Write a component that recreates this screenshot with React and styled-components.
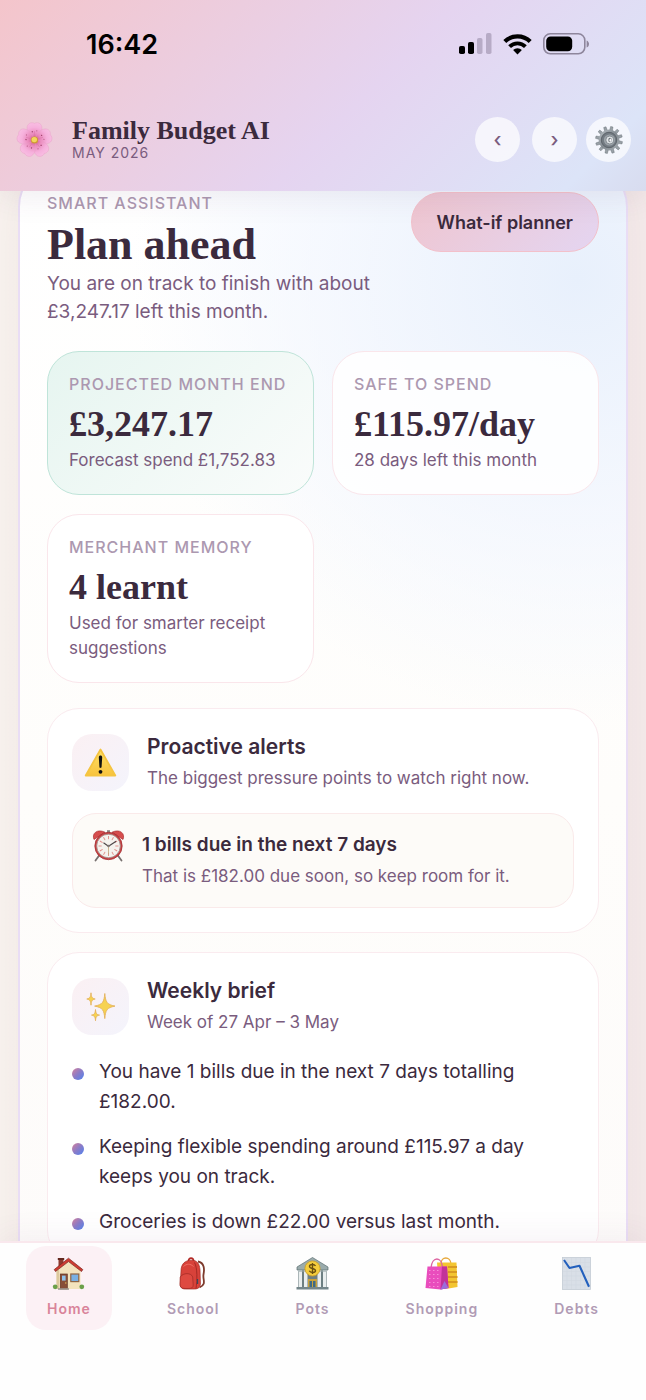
import React from 'react'
import styled, { createGlobalStyle } from 'styled-components'

const GlobalStyle = createGlobalStyle`
  * {
    box-sizing: border-box;
  }
  body {
    margin: 0;
    font-family: Inter, 'Liberation Sans', sans-serif;
    color: #3b2a3d;
    background: #ffffff;
  }
  h1, h2, h3, p, ul {
    margin: 0;
    padding: 0;
  }
  button {
    font-family: inherit;
    border: none;
    cursor: pointer;
  }
`

const Screen = styled.div`
  display: flex;
  flex-direction: column;
  height: 100vh;
  overflow: hidden;
`

/* header */

const Header = styled.header`
  position: relative;
  z-index: 2;
  flex-shrink: 0;
  background: linear-gradient(135deg, #f4c5cb 0%, #e5d4f0 55%, #dce4f8 90%, #d8dcef 100%);
  box-shadow: 0 4px 30px rgba(90, 60, 100, 0.1);
`

const StatusBar = styled.div`
  display: flex;
  align-items: center;
  justify-content: space-between;
  height: 88px;
  padding: 0 56px 0 86px;
`

const Clock = styled.span`
  font-size: 27px;
  font-weight: 600;
  color: #000000;
`

const StatusIcons = styled.div`
  display: flex;
  align-items: center;
  gap: 11px;
`

const TopBar = styled.div`
  display: flex;
  align-items: center;
  height: 103px;
  padding: 0 15px 0 16px;
  gap: 9px;
`

const Brand = styled.div`
  flex: 1;
  display: flex;
  align-items: center;
  gap: 19px;
`

const AppName = styled.h1`
  font-family: 'Liberation Serif', serif;
  font-size: 26px;
  font-weight: 700;
  line-height: 26px;
`

const Month = styled.p`
  font-size: 14px;
  line-height: 18px;
  letter-spacing: 1px;
  color: #7a5c7e;
`

const MonthSwitch = styled.div`
  display: flex;
  gap: 12px;
`

const RoundButton = styled.button`
  display: flex;
  align-items: center;
  justify-content: center;
  width: 45px;
  height: 45px;
  padding: 0;
  border-radius: 50%;
  font-size: 20px;
  font-weight: 500;
  line-height: 24px;
  color: #7a5c7e;
  background: rgba(255, 255, 255, 0.7);
`

/* content */

const Content = styled.main`
  flex: 1;
  min-height: 0;
  overflow: auto;
  scrollbar-width: none;
  padding: 0 18px;
  background: linear-gradient(90deg, #f8f2ee 0%, #f4eaea 100%);
`

const Assistant = styled.section`
  margin-top: -28px;
  margin-bottom: 40px;
  padding: 27px;
  border: 2px solid #e9ddf5;
  border-radius: 44px;
  background:
    radial-gradient(circle at 92% 10%, #e8f0fc 0%, rgba(240, 245, 254, 0.7) 20%, rgba(255, 255, 255, 0) 38%),
    linear-gradient(180deg, #ffffff 0%, #fefdfb 55%, #fdfbfa 100%);
  box-shadow: 0 8px 40px rgba(120, 80, 110, 0.06);
`

const AssistantHead = styled.div`
  display: flex;
  align-items: flex-start;
  justify-content: space-between;
  gap: 20px;
  margin-bottom: 25px;
`

const Label = styled.p`
  font-size: 16px;
  font-weight: 500;
  line-height: 23px;
  letter-spacing: 1px;
  text-transform: uppercase;
  white-space: nowrap;
  color: #ac98b0;
`

const Title = styled.h2`
  margin: 6px 0 1px;
  font-family: 'Liberation Serif', serif;
  font-size: 44px;
  font-weight: 700;
  line-height: 48px;
`

const Lead = styled.p`
  font-size: 19px;
  line-height: 28px;
  color: #7a5c7e;
`

const PlannerButton = styled.button`
  flex-shrink: 0;
  height: 60px;
  padding: 0 25px;
  border: 1px solid #f3c0ca;
  border-radius: 30px;
  font-size: 18px;
  font-weight: 600;
  color: #3b2a3d;
  background: linear-gradient(135deg, #efc5cf 0%, #e4d5f1 100%);
`

const Stats = styled.div`
  display: grid;
  grid-template-columns: 1fr 1fr;
  gap: 19px 18px;
  margin-bottom: 25px;
`

const Stat = styled.div`
  padding: 21px;
  border: 1px solid ${props => props.$good ? '#bfe4d9' : '#fae6eb'};
  border-radius: 32px;
  background: ${props => props.$good
    ? 'linear-gradient(135deg, #e6f5f0 0%, #fafcfb 100%)'
    : 'rgba(255, 255, 255, 0.85)'};
`

const StatValue = styled.p`
  margin: 8px 0 4px;
  font-family: 'Liberation Serif', serif;
  font-size: 36px;
  font-weight: 700;
  line-height: 40px;
  white-space: nowrap;
`

const StatNote = styled.p`
  font-size: 17px;
  line-height: 25px;
  color: #7a5c7e;
`

const Panel = styled.section`
  margin-bottom: 19px;
  padding: 24px;
  border: 1px solid #faebef;
  border-radius: 32px;
  background: rgba(255, 255, 255, 0.9);
`

const PanelHead = styled.div`
  display: flex;
  align-items: center;
  gap: 18px;
  margin-bottom: 21px;
`

const IconTile = styled.div`
  display: flex;
  align-items: center;
  justify-content: center;
  width: 57px;
  height: 57px;
  border-radius: 20px;
  background: linear-gradient(135deg, #fbf0f3 0%, #f4f4fc 100%);
`

const PanelTitle = styled.h3`
  font-size: ${props => props.$small ? '19px' : '21px'};
  font-weight: 600;
  line-height: 28px;
`

const PanelNote = styled.p`
  margin-top: 3px;
  font-size: 17px;
  line-height: 28px;
  color: #7a5c7e;
`

const Alert = styled.div`
  display: flex;
  align-items: flex-start;
  gap: 17px;
  padding: 17px 19px;
  border: 1px solid #faeaea;
  border-radius: 24px;
  background: #fdfbf8;

  svg {
    margin-top: -2px;
  }
`

const BriefList = styled.ul`
  display: flex;
  flex-direction: column;
  gap: 15px;
  list-style: none;
`

const BriefItem = styled.li`
  display: flex;
  gap: 15px;
  font-size: 19px;
  line-height: 30px;

  &::before {
    content: '';
    flex-shrink: 0;
    width: 12px;
    height: 12px;
    margin-top: 11px;
    border-radius: 50%;
    background: linear-gradient(135deg, #d7819b 0%, #8a7cc8 50%, #4f83f0 100%);
  }
`

/* bottom navigation */

const Nav = styled.nav`
  position: relative;
  z-index: 2;
  flex-shrink: 0;
  display: flex;
  justify-content: space-around;
  padding: 3px 9px 70px;
  border-top: 2px solid #f9e8ed;
  background: #fefefe;
  box-shadow: 0 -4px 30px rgba(120, 70, 110, 0.07);
`

const NavItem = styled.a`
  display: flex;
  flex-direction: column;
  align-items: center;
  gap: 8px;
  padding: 11px 21px 10px;
  border-radius: 20px;
  font-size: 14px;
  font-weight: 600;
  line-height: 22px;
  letter-spacing: 1px;
  text-decoration: none;
  color: ${props => props.$active ? '#d9849a' : '#b19bb5'};
  background: ${props => props.$active ? '#fcf1f5' : 'transparent'};
`

/* icons */

const Signal = () => (
  <svg width="33" height="22" viewBox="0 0 33 22" aria-hidden="true">
    <rect x="0" y="13" width="6" height="8" rx="1.8" />
    <rect x="9" y="9" width="6" height="12" rx="1.8" />
    <rect x="18" y="5" width="5.500" height="16" rx="1.8" fill="#b7abc6" />
    <rect x="27" y="0" width="5.500" height="21" rx="1.8" fill="#b7abc6" />
  </svg>
)

const Wifi = () => (
  <svg width="29" height="21" viewBox="0 0 29 21" aria-hidden="true">
    <path d="M1.800 7.600a18 18 0 0 1 25.400 0" fill="none" stroke="#000" strokeWidth="4.200" />
    <path d="M6.600 12.600a11.200 11.200 0 0 1 15.800 0" fill="none" stroke="#000" strokeWidth="3.900" />
    <path d="M14.500 20.600l-4.400-4.500a6.400 6.400 0 0 1 8.800 0z" />
  </svg>
)

const Battery = () => (
  <svg width="47" height="22" viewBox="0 0 47 22" aria-hidden="true">
    <rect x="0.800" y="0.800" width="41" height="20" rx="6.500" fill="none" stroke="#8e869c" strokeWidth="1.600" />
    <rect x="3.200" y="3.400" width="26" height="14.800" rx="4.400" />
    <path d="M43.600 7.400c3.200 1 3.200 6 0 7z" fill="#8e869c" />
  </svg>
)

const Blossom = () => (
  <svg width="37" height="37" viewBox="0 0 37 37" aria-hidden="true">
    <defs>
      <radialGradient id="petal" gradientUnits="userSpaceOnUse" cx="18.500" cy="19" r="18">
        <stop offset="0" stopColor="#c94f86" />
        <stop offset="0.350" stopColor="#ea8bbd" />
        <stop offset="0.700" stopColor="#f6b0dc" />
        <stop offset="1" stopColor="#f9bfe3" />
      </radialGradient>
    </defs>
    {[0, 72, 144, 216, 288].map(angle => (
      <g key={angle} transform={`rotate(${angle} 18.500 19)`}>
        <path d="M18.500 19C13 15 10.300 10 11.200 5.600c.8-3.500 4.600-4.800 7.300-3.200 2.700-1.600 6.500-.3 7.300 3.200C26.700 10 24 15 18.500 19z" fill="url(#petal)" stroke="#e79cc6" strokeWidth="0.400" />
        <path d="M18.500 16v-6" fill="none" stroke="#d873a8" strokeWidth="0.500" />
        <circle cx="16.300" cy="10.800" r="0.700" fill="#a2446e" />
        <circle cx="20.800" cy="9.800" r="0.600" fill="#b65c86" />
      </g>
    ))}
    <circle cx="18.500" cy="19" r="3.600" fill="#cf9a35" />
    <circle cx="18.300" cy="18.600" r="2.700" fill="#f3d65c" />
  </svg>
)

const Gear = () => (
  <svg width="28" height="28" viewBox="0 0 28 28" aria-hidden="true">
    <defs>
      <linearGradient id="steel" x1="0" y1="0" x2="1" y2="1">
        <stop offset="0" stopColor="#b9c0c5" />
        <stop offset="0.500" stopColor="#838b91" />
        <stop offset="1" stopColor="#a9b0b5" />
      </linearGradient>
    </defs>
    {[0, 30, 60, 90, 120, 150, 180, 210, 240, 270, 300, 330].map(angle => (
      <path key={angle} d="M12.600 4.500l.2-4h2.400l.2 4z" fill="#99a1a7" stroke="#636b71" strokeWidth="0.400" transform={`rotate(${angle + 12} 14 14)`} />
    ))}
    <circle cx="14" cy="14" r="10.400" fill="url(#steel)" />
    <circle cx="14" cy="14" r="7.700" fill="#737b82" stroke="#596067" strokeWidth="0.900" />
    <circle cx="14.500" cy="14" r="5.600" fill="#9da4aa" />
    <circle cx="14.800" cy="14" r="4" fill="#e2e5e8" stroke="#7c848a" strokeWidth="0.900" />
    <ellipse cx="15" cy="14" rx="1.700" ry="2.300" fill="#666e74" />
    <ellipse cx="15.400" cy="14.200" rx="1" ry="1.600" fill="#f5f5f7" />
  </svg>
)

const Warning = () => (
  <svg width="33" height="29" viewBox="0 0 33 29" aria-hidden="true">
    <defs>
      <linearGradient id="warn" x1="0" y1="0" x2="0" y2="1">
        <stop offset="0" stopColor="#ffe066" />
        <stop offset="1" stopColor="#f8c33d" />
      </linearGradient>
    </defs>
    <path d="M16.500 1.500L31.300 27.500H1.700z" fill="url(#warn)" stroke="#f5c440" strokeWidth="1.800" strokeLinejoin="round" />
    <path d="M14.800 9.200c0-2.400 3.400-2.400 3.400 0l-.6 9.600c-.1 1.600-2.100 1.600-2.200 0z" fill="#111111" />
    <circle cx="16.500" cy="23.800" r="1.900" fill="#111111" />
  </svg>
)

const AlarmClock = () => (
  <svg width="33" height="33" viewBox="0 0 33 33" aria-hidden="true">
    <path d="M7.500 26l-4 5.500M25.500 26l4 5.500" stroke="#77706f" strokeWidth="1.800" strokeLinecap="round" />
    <path d="M16.500 4V1.200" stroke="#8c8583" strokeWidth="3" />
    <path d="M2 10.500C-.5 4.500 5-.5 13 3.200zM31 10.500C33.500 4.500 28-.5 20 3.200z" fill="#d64d4d" stroke="#aa3134" strokeWidth="0.700" />
    <circle cx="16.500" cy="17" r="13.700" fill="#c94446" stroke="#9c2c30" strokeWidth="0.700" />
    <circle cx="16.500" cy="17" r="11.800" fill="#f5f3ee" stroke="#9a8c87" strokeWidth="0.800" />
    {[0, 30, 60, 90, 120, 150, 180, 210, 240, 270, 300, 330].map(angle => (
      <path key={angle} d="M16.500 7v3.200" stroke="#e08a85" strokeWidth="0.900" transform={`rotate(${angle} 16.500 17)`} />
    ))}
    <path d="M11.500 13.800l5 3.500 7.600-5" fill="none" stroke="#4d4747" strokeWidth="1.100" />
    <path d="M16.500 17v8.500" stroke="#c0a778" strokeWidth="0.800" />
    <circle cx="16.500" cy="17" r="1.200" fill="#827876" />
  </svg>
)

const Sparkles = () => (
  <svg width="30" height="30" viewBox="0 0 30 30" aria-hidden="true">
    <g fill="#f6d251" stroke="#e2ad54" strokeWidth="0.800" strokeLinejoin="round">
      <path d="M18.800 1.500c.8 8.500 2 11 10.200 12.600-8.200 1.600-9.400 4-10.200 12.500-.8-8.500-2-10.900-10.200-12.500 8.200-1.600 9.400-4.100 10.200-12.600z" />
      <path d="M5 .8c.4 4.300 1 5.500 4.200 6.200C6 7.700 5.400 8.900 5 13.200 4.600 8.900 4 7.700.8 7 4 6.300 4.600 5.100 5 .8z" />
      <path d="M9.500 17.500c.4 4 1 5 4 5.600-3 .6-3.600 1.600-4 5.600-.4-4-1-5-4-5.600 3-.6 3.600-1.600 4-5.600z" />
    </g>
  </svg>
)

const House = () => (
  <svg width="33" height="33" viewBox="0 0 33 33" aria-hidden="true">
    <rect x="6.500" y="2" width="5" height="10" fill="#8c3a2e" />
    <rect x="5.800" y="1" width="6.400" height="2" fill="#63281f" />
    <path d="M4.500 13L16.500 4 28.500 13v19h-24z" fill="#f3e3bd" />
    <path d="M4.500 13H7v19H4.500z" fill="#dcc89d" />
    <path d="M16.500 1.200L2.200 12.600l1.300 1.900L16.500 4.600l13 9.900 1.300-1.900z" fill="#cf3c32" stroke="#782520" strokeWidth="0.700" />
    <rect x="8.300" y="17" width="7" height="15" fill="#884e38" stroke="#633322" strokeWidth="0.700" />
    <rect x="10" y="18.600" width="3.600" height="5" fill="#8fc2ec" />
    <circle cx="13.800" cy="26" r=".7" fill="#e9c15d" />
    <rect x="18.800" y="17" width="8" height="7.600" fill="#79b0e4" stroke="#8e6444" strokeWidth="1.200" />
    <circle cx="3.200" cy="29.800" r="2.400" fill="#6ba04a" />
    <circle cx="29.800" cy="29.800" r="2.400" fill="#6ba04a" />
    <path d="M6 32h11" stroke="#a09b93" strokeWidth="1.600" />
  </svg>
)

const Backpack = () => (
  <svg width="33" height="33" viewBox="0 0 33 33" aria-hidden="true">
    <path d="M21 4.500c6.500 1 6.500 8 5.500 13s3.500 10-4 13" fill="none" stroke="#7d3a2c" strokeWidth="1.800" />
    <path d="M11.500 4c0-3.800 5-3.800 5 0" fill="none" stroke="#b32a26" strokeWidth="1.700" />
    <path d="M4 14C4 6.500 8.500 3.200 14.500 3.200c5.500 0 8 3.300 8.500 9.800l.4 13c.2 4-2 6-6 6H8.500c-4 0-5.500-2-5.200-5z" fill="#d8423a" stroke="#a32823" strokeWidth="0.700" />
    <path d="M17.500 5.500c3 5 2.800 18 1.500 26" fill="none" stroke="#9e2723" strokeWidth="0.900" />
    <path d="M3.200 20c3-4.500 11-4.500 12.500 0l.5 8c0 3-2 3.500-5 3.500H8c-3.500 0-5.200-1.500-5-4.500z" fill="#de4a41" stroke="#9e2a24" strokeWidth="0.700" />
    <path d="M6.500 9.500c3-3 7-3 10 0" fill="none" stroke="#ef7469" strokeWidth="0.900" />
    <path d="M20.500 22v5" stroke="#3d4658" strokeWidth="1.300" />
  </svg>
)

const Bank = () => (
  <svg width="33" height="33" viewBox="0 0 33 33" aria-hidden="true">
    <rect x="2" y="11" width="29" height="19" fill="#6d7f82" />
    <path d="M16.500.5L32 10v3H1v-3z" fill="#9aabac" stroke="#5d6e71" strokeWidth="0.700" />
    {[2.5, 8, 21.5, 27].map(x => (
      <g key={x}>
        <rect x={x} y="14" width="3.500" height="16" fill="#e9eeee" />
        <rect x={x - 0.5} y="13" width="4.500" height="1.800" fill="#aebbbc" />
      </g>
    ))}
    <rect x="12" y="22" width="9" height="9" fill="#c9a23a" />
    <rect x="13.500" y="24" width="2.500" height="7" fill="#3e6a86" />
    <rect x="17" y="24" width="2.500" height="7" fill="#3e6a86" />
    <path d="M.5 31.300h32" stroke="#74868a" strokeWidth="2.600" />
    <circle cx="16.500" cy="11.500" r="7.600" fill="#f4cd3c" stroke="#c89a25" strokeWidth="0.800" />
    <path d="M19.500 9c-1-2-6-2-6 .4 0 2.600 6 1.600 6 4.400 0 2.300-5.200 2.300-6.200 0M16.500 6v11" fill="none" stroke="#6a5010" strokeWidth="1.400" />
  </svg>
)

const Bags = () => (
  <svg width="33" height="33" viewBox="0 0 33 33" aria-hidden="true">
    <path d="M16 7c0-8 9.500-8 10 0" fill="none" stroke="#e7a83b" strokeWidth="1.300" />
    <path d="M12 5.500h19.500L32.500 30l-9 1.500H14z" fill="#f3c531" />
    <path d="M23 10h9M23 15h9M23 20h9.500M23 25h9.500" stroke="#d99a22" strokeWidth="1.800" />
    <path d="M6 11C7-1 17-1 17.500 11" fill="none" stroke="#dd64a0" strokeWidth="1.300" />
    <path d="M2.500 9.500H22L23.500 31l-8 1.500L.5 31z" fill="#e94dbd" />
    <path d="M17 9.500h5L23.500 31l-8 1.500z" fill="#c23299" />
    <path d="M19.500 24l4 7-8 1.500z" fill="#9b6ddb" />
    <g fill="#f590d8">
      {[13, 17, 21, 25, 29].map(y => (
        <path key={y} d={`M4 ${y}h1.500v1H4zM8 ${y}h1.500v1H8zM12 ${y}h1.500v1H12z`} />
      ))}
    </g>
  </svg>
)

const ChartDown = () => (
  <svg width="33" height="33" viewBox="0 0 33 33" aria-hidden="true">
    <rect x="2.500" y=".5" width="28" height="32" fill="#d9dfe7" stroke="#c3cbd4" strokeWidth="0.800" />
    <path d="M7 1v31M11.500 1v31M16 1v31M20.500 1v31M25 1v31M3 5.500h27M3 10h27M3 14.500h27M3 19h27M3 23.500h27M3 28h27" stroke="#d1d8e0" strokeWidth="0.600" />
    <path d="M4 3l5.500 8 10-2.300 9.500 21" fill="none" stroke="#2360bd" strokeWidth="2.100" strokeLinejoin="round" />
  </svg>
)

const stats = [
  { label: 'Projected month end', value: '£3,247.17', note: 'Forecast spend £1,752.83', good: true },
  { label: 'Safe to spend', value: '£115.97/day', note: '28 days left this month' },
  { label: 'Merchant memory', value: '4 learnt', note: 'Used for smarter receipt suggestions' },
]

const brief = [
  'You have 1 bills due in the next 7 days totalling £182.00.',
  'Keeping flexible spending around £115.97 a day keeps you on track.',
  'Groceries is down £22.00 versus last month.',
]

const tabs = [
  { name: 'Home', icon: <House />, active: true },
  { name: 'School', icon: <Backpack /> },
  { name: 'Pots', icon: <Bank /> },
  { name: 'Shopping', icon: <Bags /> },
  { name: 'Debts', icon: <ChartDown /> },
]

export default function App() {
  return (
    <Screen>
      <GlobalStyle />
      <Header>
        <StatusBar>
          <Clock>16:42</Clock>
          <StatusIcons>
            <Signal />
            <Wifi />
            <Battery />
          </StatusIcons>
        </StatusBar>
        <TopBar>
          <Brand>
            <Blossom />
            <div>
              <AppName>Family Budget AI</AppName>
              <Month>MAY 2026</Month>
            </div>
          </Brand>
          <MonthSwitch>
            <RoundButton aria-label="Previous month">‹</RoundButton>
            <RoundButton aria-label="Next month">›</RoundButton>
          </MonthSwitch>
          <RoundButton aria-label="Settings"><Gear /></RoundButton>
        </TopBar>
      </Header>

      <Content>
        <Assistant>
          <AssistantHead>
            <div>
              <Label>Smart assistant</Label>
              <Title>Plan ahead</Title>
              <Lead>You are on track to finish with about £3,247.17 left this month.</Lead>
            </div>
            <PlannerButton>What-if planner</PlannerButton>
          </AssistantHead>

          <Stats>
            {stats.map(stat => (
              <Stat key={stat.label} $good={stat.good}>
                <Label>{stat.label}</Label>
                <StatValue>{stat.value}</StatValue>
                <StatNote>{stat.note}</StatNote>
              </Stat>
            ))}
          </Stats>

          <Panel>
            <PanelHead>
              <IconTile><Warning /></IconTile>
              <div>
                <PanelTitle>Proactive alerts</PanelTitle>
                <PanelNote>The biggest pressure points to watch right now.</PanelNote>
              </div>
            </PanelHead>
            <Alert>
              <AlarmClock />
              <div>
                <PanelTitle $small>1 bills due in the next 7 days</PanelTitle>
                <PanelNote>That is £182.00 due soon, so keep room for it.</PanelNote>
              </div>
            </Alert>
          </Panel>

          <Panel>
            <PanelHead>
              <IconTile><Sparkles /></IconTile>
              <div>
                <PanelTitle>Weekly brief</PanelTitle>
                <PanelNote>Week of 27 Apr – 3 May</PanelNote>
              </div>
            </PanelHead>
            <BriefList>
              {brief.map(line => (
                <BriefItem key={line}>{line}</BriefItem>
              ))}
            </BriefList>
          </Panel>
        </Assistant>
      </Content>

      <Nav>
        {tabs.map(tab => (
          <NavItem key={tab.name} href={`#${tab.name.toLowerCase()}`} $active={tab.active}>
            {tab.icon}
            {tab.name}
          </NavItem>
        ))}
      </Nav>
    </Screen>
  )
}
